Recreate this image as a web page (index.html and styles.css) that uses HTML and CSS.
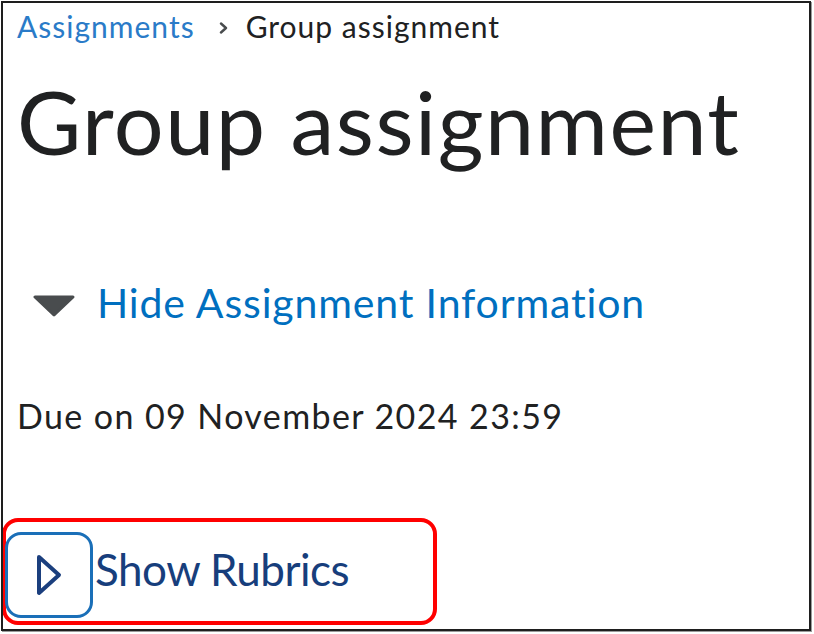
FILE: index.html
```html
<!DOCTYPE html>
<html lang="en">
<head>
    <meta charset="UTF-8">
    <meta name="viewport" content="width=device-width, initial-scale=1.0">
    <title>Group assignment</title>
    <link rel="stylesheet" href="styles.css">
</head>
<body>

<div class="frame">
    <!-- Okruszki -->
    <nav class="breadcrumb">
        <a href="#">Assignments</a>
        <svg class="sep" width="9" height="12" viewBox="0 0 9 12">
            <path d="M2 1.5 L7 6 L2 10.5" fill="none" stroke="#494c4e" stroke-width="2.4" stroke-linecap="round" stroke-linejoin="round"/>
        </svg>
        <span>Group assignment</span>
    </nav>

    <h1 class="title">Group assignment</h1>

    <button class="info-toggle" type="button">
        <svg class="caret" width="42" height="22" viewBox="0 0 42 22">
            <path d="M2 2 L40 2 L21 20 Z" fill="#494c4e" stroke="#494c4e" stroke-width="3" stroke-linejoin="round"/>
        </svg>
        <span>Hide Assignment Information</span>
    </button>

    <p class="due">Due on 09 November 2024 23:59</p>

    <div class="rubrics">
        <button class="rubrics-btn" type="button">
            <span class="rubrics-icon">
                <svg width="26" height="42" viewBox="0 0 26 42">
                    <path d="M3 3 L23 21 L3 39 Z" fill="none" stroke="#1b3f7e" stroke-width="4" stroke-linejoin="round"/>
                </svg>
            </span>
            <span class="rubrics-label">Show Rubrics</span>
        </button>
    </div>
</div>

</body>
</html>
```

FILE: styles.css
```css
/* Reset */
* {
    margin: 0;
    padding: 0;
    box-sizing: border-box;
}

body {
    font-family: Lato, "Noto Sans", sans-serif;
    background-color: white;
    color: #202122;
}

/* Ramka */
.frame {
    margin: 1px 3px 3px 1px;
    width: 810px;
    height: 630px;
    border: 2px solid #1e1e1e;
    box-shadow: 1px 1px 0 #9a9a9a;
    padding: 0 0 0 14px;
    overflow: hidden;
}

/* Okruszki */
.breadcrumb {
    display: flex;
    align-items: center;
    font-size: 30px;
    line-height: 36px;
    letter-spacing: 1px;
    padding-top: 5px;
    color: #202122;
}

.breadcrumb a {
    color: #2a7bc8;
    text-decoration: none;
}

.breadcrumb .sep {
    margin: 4px 18px 0 24px;
}

/* Tytuł */
.title {
    font-size: 88px;
    font-weight: normal;
    line-height: 106px;
    letter-spacing: 1.5px;
    margin-top: 24px;
}

/* Przełącznik informacji */
.info-toggle {
    display: flex;
    align-items: flex-start;
    gap: 22px;
    margin-top: 104px;
    margin-left: 16px;
    background: none;
    border: none;
    font-family: inherit;
    font-size: 41px;
    line-height: 1.2;
    letter-spacing: 0.85px;
    color: #006fbf;
    cursor: pointer;
}

.info-toggle .caret {
    margin-top: 17px;
}

.due {
    font-size: 34px;
    line-height: 1.2;
    letter-spacing: 1.4px;
    margin-top: 69px;
}

/* Rubryki */
.rubrics {
    margin: 81px 0 0 -15px;
    width: 435px;
    height: 107px;
    border: 4px solid #ff0000;
    border-radius: 16px;
    padding: 10px 0 0 0;
}

.rubrics-btn {
    display: flex;
    align-items: center;
    margin-left: -1px;
    background: none;
    border: none;
    font-family: inherit;
    cursor: pointer;
}

.rubrics-icon {
    display: flex;
    align-items: center;
    justify-content: center;
    width: 88px;
    height: 86px;
    border: 3px solid #1a6fb8;
    border-radius: 16px;
}

.rubrics-label {
    font-size: 44px;
    line-height: 1.2;
    letter-spacing: -0.5px;
    color: #173e7c;
    margin: 0 0 11px 2px;
}
```
